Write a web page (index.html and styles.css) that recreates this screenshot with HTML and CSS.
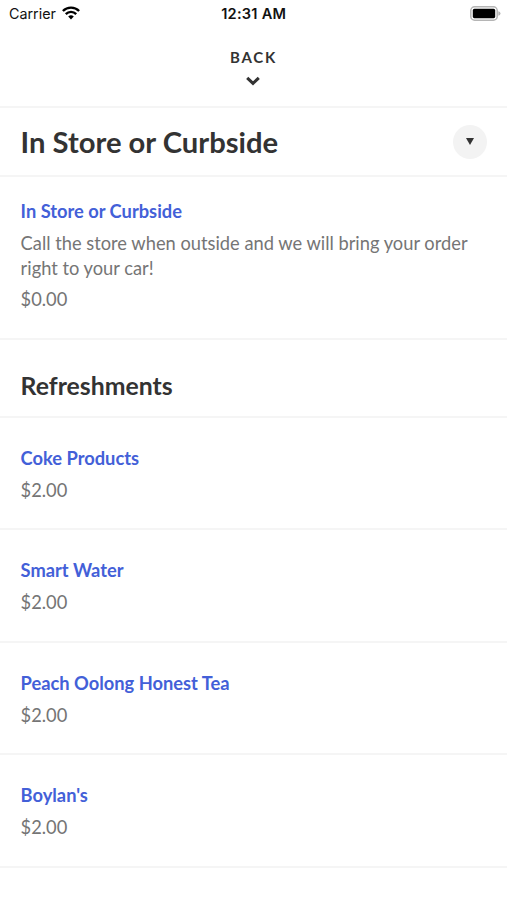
FILE: index.html
```html
<!DOCTYPE html>
<html lang="en">
<head>
    <meta charset="UTF-8" />
    <meta name="viewport" content="width=device-width, initial-scale=1" />
    <title>Menu</title>
    <link rel="stylesheet" href="styles.css">
</head>
<body>

<div class="status-bar">
    <div class="carrier">
        <span>Carrier</span>
        <svg class="wifi" viewBox="0 0 18 14" aria-hidden="true">
            <path d="M.9 5a11.5 11.5 0 0 1 16.2 0M3.8 8.1a7.3 7.3 0 0 1 10.4 0" />
            <path class="dot" d="M6.2 10.5a4.1 4.1 0 0 1 5.6 0L9 13.4z" />
        </svg>
    </div>
    <div class="time">12:31 AM</div>
    <svg class="battery" viewBox="0 0 31 15" aria-hidden="true">
        <rect class="case" x="0.8" y="0.8" width="26.4" height="13.4" rx="3.8" />
        <rect x="2.8" y="2.8" width="22.4" height="9.4" rx="1.6" />
        <path class="cap" d="M28.3 5.2q2.2.6 2.2 2.3t-2.2 2.3z" />
    </svg>
</div>

<header class="back">
    <span>BACK</span>
    <svg viewBox="0 0 14 10" aria-hidden="true"><path d="M1.2 1.8L7 7.4l5.8-5.6" /></svg>
</header>

<div class="title-row">
    <h1>In Store or Curbside</h1>
    <button class="toggle" aria-label="Sections">
        <svg viewBox="0 0 8 7" aria-hidden="true"><path d="M0 0h8L4 7z" /></svg>
    </button>
</div>

<main>
    <div class="item pickup">
        <h3>In Store or Curbside</h3>
        <p class="description">Call the store when outside and we will bring your order right to your car!</p>
        <p>$0.00</p>
    </div>

    <h2>Refreshments</h2>
    <div class="item">
        <h3>Coke Products</h3>
        <p>$2.00</p>
    </div>
    <div class="item">
        <h3>Smart Water</h3>
        <p>$2.00</p>
    </div>
    <div class="item">
        <h3>Peach Oolong Honest Tea</h3>
        <p>$2.00</p>
    </div>
    <div class="item">
        <h3>Boylan's</h3>
        <p>$2.00</p>
    </div>
</main>

</body>
</html>
```
FILE: styles.css
```css
* { box-sizing: border-box; }
body {
  margin: 0;
  font-family: Lato, sans-serif;
  background: #fff;
  color: #333;
}
h1, h2, h3, p { margin: 0; }

.status-bar {
  display: grid;
  grid-template-columns: 1fr auto 1fr;
  align-items: center;
  height: 27px;
  padding: 0 6.5px 0 9px;
  font-family: Inter, sans-serif;
  font-size: 14.3px;
  color: #111;
}
.carrier { display: flex; align-items: center; gap: 6px; }
.wifi { width: 18px; height: 14px; margin-top: -1px; fill: none; stroke: #000; stroke-width: 2.4; }
.wifi .dot { fill: #000; stroke: none; }
.time { font-size: 14.6px; font-weight: 600; letter-spacing: 0.25px; margin-right: 2px; }
.battery { width: 31px; height: 15px; margin-top: -1px; justify-self: end; }
.battery .case { fill: none; stroke: #b5b5b5; stroke-width: 1.5; }
.battery .cap { fill: #b5b5b5; }

.back {
  display: flex;
  flex-direction: column;
  align-items: center;
  height: 81px;
  padding-top: 20px;
  border-bottom: 2px solid #f5f5f5;
  font-size: 15px;
  font-weight: 700;
  line-height: 20px;
  letter-spacing: 1.8px;
}
.back svg { width: 14px; height: 10px; margin: 9px 1px 0 0; fill: none; stroke: #333; stroke-width: 3; }

.title-row {
  display: flex;
  align-items: center;
  justify-content: space-between;
  height: 69px;
  padding: 0 20px 0 20.6px;
  border-bottom: 2px solid #f5f5f5;
}
h1 { font-size: 29.2px; font-weight: 700; line-height: 36px; }
.toggle {
  display: flex;
  align-items: center;
  justify-content: center;
  width: 34px;
  height: 34px;
  padding: 0;
  border: none;
  border-radius: 50%;
  background: #f3f3f3;
}
.toggle svg { width: 8px; height: 7px; fill: #333; }

.item {
  height: 112.4px;
  padding: 28px 20.6px 0;
  border-bottom: 2px solid #f5f5f5;
  font-size: 18.3px;
  line-height: 24.6px;
  color: #757575;
}
.item h3 { margin-bottom: 7.2px; font-size: 18.3px; font-weight: 700; color: #4360d8; }
.pickup { height: 163px; padding-top: 22.2px; }
.pickup .description { margin-bottom: 7px; }

h2 {
  height: 78px;
  padding: 31px 20.6px 0;
  border-bottom: 2px solid #f5f5f5;
  font-size: 24.8px;
  font-weight: 700;
  line-height: 30px;
}
```
